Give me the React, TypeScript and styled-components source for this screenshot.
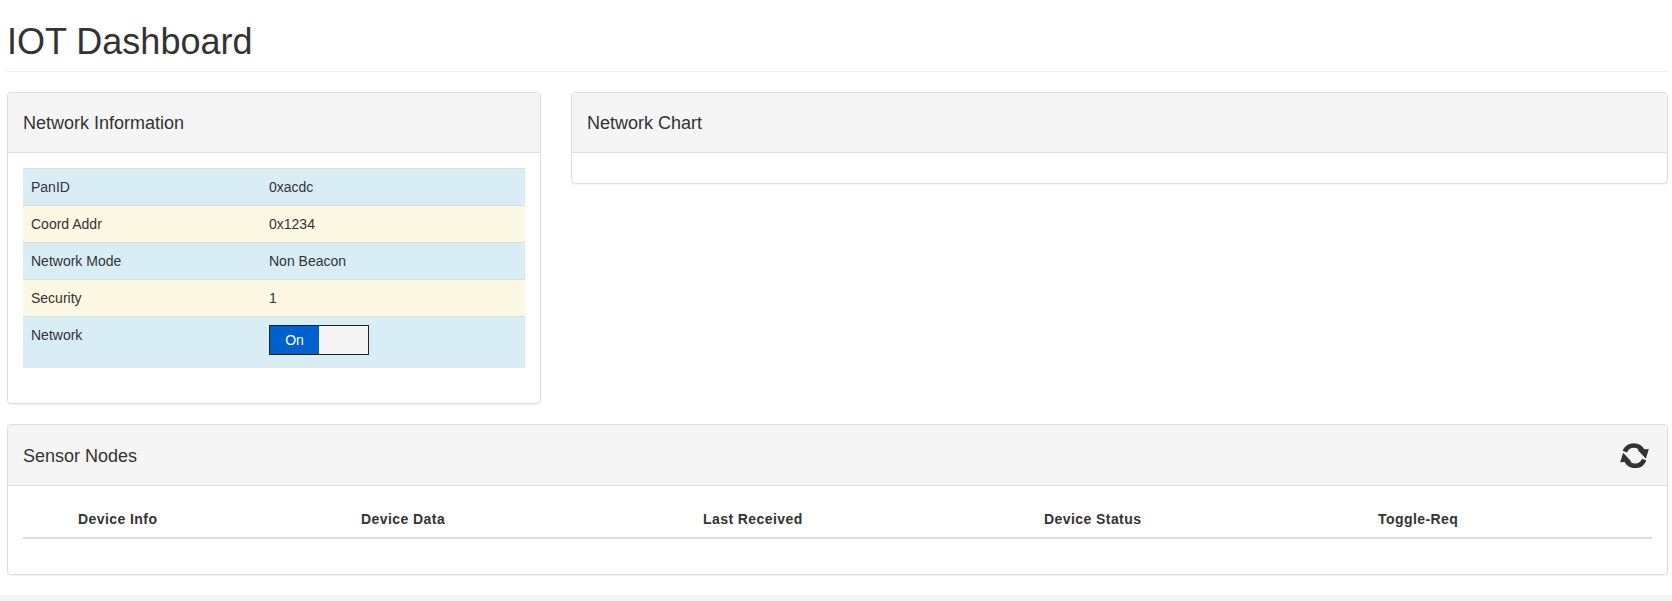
import styled, { createGlobalStyle } from "styled-components";

const networkRows = [
	{ label: "PanID", value: "0xacdc", tone: "info" },
	{ label: "Coord Addr", value: "0x1234", tone: "warning" },
	{ label: "Network Mode", value: "Non Beacon", tone: "info" },
	{ label: "Security", value: "1", tone: "warning" },
];

const sensorColumns = [
	{ title: "Device Info", width: 283 },
	{ title: "Device Data", width: 342 },
	{ title: "Last Received", width: 341 },
	{ title: "Device Status", width: 334 },
	{ title: "Toggle-Req", width: 329 },
];

function RefreshIcon() {
	return (
		<RefreshSvg viewBox="32 22 86 75" aria-label="refresh">
			<path d="M46 48C56 23 89 24 100 47" />
			<path d="M104 72C94 97 61 96 50 73" />
			<polygon points="84,42 118,40 109,69" />
			<polygon points="66,78 32,80 41,51" />
		</RefreshSvg>
	);
}

function App() {
	return (
		<>
			<GlobalStyle />
			<Page>
				<PageHeader>
					<Title>IOT Dashboard</Title>
				</PageHeader>
				<TopRow>
					<Panel>
						<PanelHeading>
							<PanelTitle>Network Information</PanelTitle>
						</PanelHeading>
						<PanelBody>
							<InfoTable>
								<tbody>
									{networkRows.map((row) => (
										<InfoRow key={row.label} $tone={row.tone}>
											<LabelCell>{row.label}</LabelCell>
											<InfoCell>{row.value}</InfoCell>
										</InfoRow>
									))}
									<InfoRow $tone="info">
										<LabelCell>Network</LabelCell>
										<InfoCell>
											<Toggle>
												<ToggleOn>On</ToggleOn>
												<ToggleOff />
											</Toggle>
										</InfoCell>
									</InfoRow>
								</tbody>
							</InfoTable>
						</PanelBody>
					</Panel>
					<Panel>
						<PanelHeading>
							<PanelTitle>Network Chart</PanelTitle>
						</PanelHeading>
						<EmptyBody />
					</Panel>
				</TopRow>
				<Panel>
					<SpacedHeading>
						<SensorTitle>Sensor Nodes</SensorTitle>
						<RefreshIcon />
					</SpacedHeading>
					<PanelBody>
						<SensorTable>
							<thead>
								<tr>
									{sensorColumns.map((col) => (
										<SensorHead key={col.title} $width={col.width}>
											{col.title}
										</SensorHead>
									))}
								</tr>
							</thead>
						</SensorTable>
					</PanelBody>
				</Panel>
			</Page>
			<Footer />
		</>
	);
}

export default App;

const GlobalStyle = createGlobalStyle`
	* {
		box-sizing: border-box;
	}

	body {
		margin: 0;
		background: #fff;
		color: #333;
		font-family: "Liberation Sans", Arial, sans-serif;
		font-size: 14px;
		line-height: 20px;
	}
`;

const Page = styled.div`
	padding: 0 4px 0 7px;
`;

const PageHeader = styled.div`
	height: 72px;
	padding-top: 22px;
	margin-bottom: 20px;
	border-bottom: 1px solid #eee;
`;

const Title = styled.h1`
	margin: 0;
	font-size: 36px;
	font-weight: 500;
	line-height: 40px;
`;

const TopRow = styled.div`
	display: grid;
	grid-template-columns: 534px 1fr;
	gap: 30px;
	align-items: start;
`;

const Panel = styled.section`
	margin-bottom: 20px;
	background: #fff;
	border: 1px solid #ddd;
	border-radius: 4px;
	box-shadow: 0 1px 1px rgba(0, 0, 0, 0.05);
`;

const PanelHeading = styled.div`
	height: 60px;
	padding: 0 15px;
	display: flex;
	align-items: center;
	background: #f5f5f5;
	border-bottom: 1px solid #ddd;
	border-radius: 3px 3px 0 0;
`;

const SpacedHeading = styled(PanelHeading)`
	height: 61px;
	justify-content: space-between;
	padding-right: 18px;
`;

const PanelTitle = styled.h3`
	margin: 0;
	font-size: 18px;
	font-weight: 500;
	line-height: 20px;
`;

const SensorTitle = styled(PanelTitle)`
	padding-top: 1px;
`;

const PanelBody = styled.div`
	padding: 15px;
`;

const EmptyBody = styled.div`
	height: 30px;
`;

const InfoTable = styled.table`
	width: 100%;
	margin-bottom: 20px;
	border-collapse: collapse;
	table-layout: fixed;
`;

const InfoRow = styled.tr<{ $tone: string }>`
	background: ${(p) => (p.$tone === "info" ? "#d9edf7" : "#fcf8e3")};
`;

const InfoCell = styled.td`
	padding: 8px;
	vertical-align: top;
	border-top: 1px solid #ddd;
`;

const LabelCell = styled(InfoCell)`
	width: 238px;
`;

const Toggle = styled.div`
	display: flex;
	width: 100px;
	height: 30px;
	margin-bottom: 5px;
	border: 1px solid #222;
`;

const ToggleOn = styled.span`
	width: 49px;
	background: #0060cc;
	color: #fff;
	text-align: center;
	line-height: 28px;
`;

const ToggleOff = styled.span`
	flex: 1;
	background: #f4f4f4;
`;

const SensorTable = styled.table`
	width: 1629px;
	margin-bottom: 20px;
	border-collapse: collapse;
	table-layout: fixed;
`;

const SensorHead = styled.th<{ $width: number }>`
	width: ${(p) => p.$width}px;
	padding: 8px 0 8px 55px;
	text-align: left;
	font-weight: 700;
	letter-spacing: 0.43px;
	border-bottom: 2px solid #ddd;
`;

const RefreshSvg = styled.svg`
	width: 29px;
	height: 25px;
	fill: #333;
	stroke: #333;

	path {
		fill: none;
		stroke-width: 14;
	}

	polygon {
		stroke: none;
	}
`;

const Footer = styled.div`
	height: 6px;
	background: #f5f5f5;
`;
